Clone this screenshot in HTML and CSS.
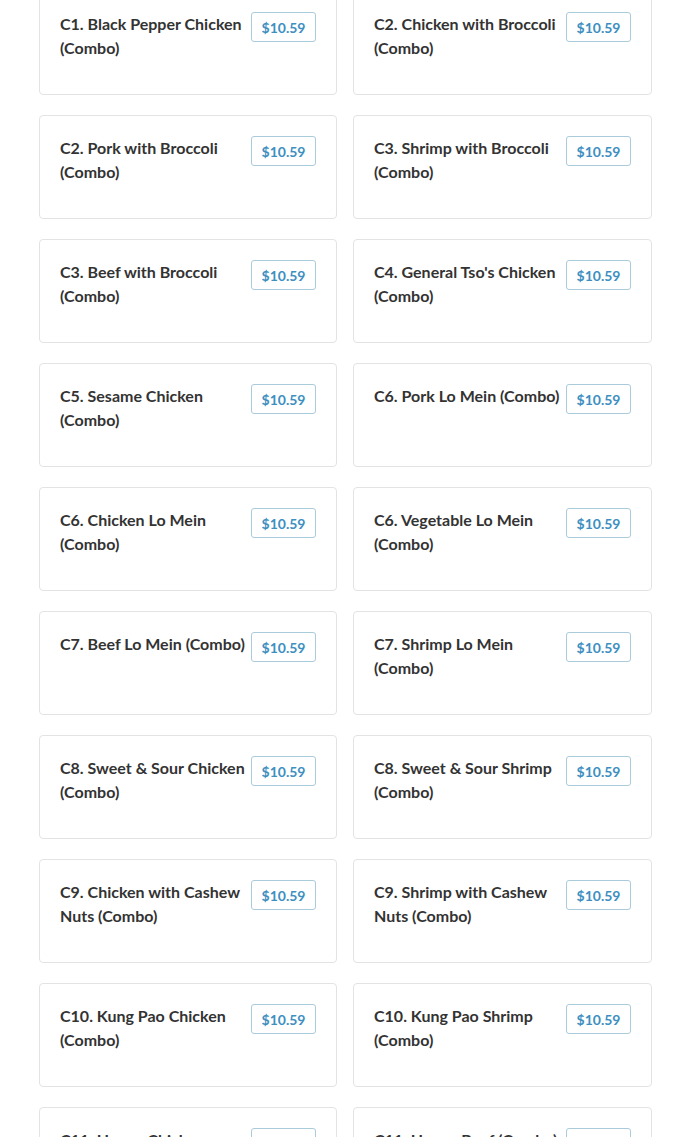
FILE: index.html
```html
<!DOCTYPE html>
<html lang="en">
<head>
    <meta charset="UTF-8">
    <meta name="viewport" content="width=device-width, initial-scale=1.0">
    <title>Combo Menu</title>
    <link rel="stylesheet" href="styles.css">
</head>
<body>

<div class="menu" id="menu">
    <!-- combo items are added by the script below -->
</div>

<script>
    const items = [
        "C1. Black Pepper Chicken (Combo)", "C2. Chicken with Broccoli (Combo)",
        "C2. Pork with Broccoli (Combo)", "C3. Shrimp with Broccoli (Combo)",
        "C3. Beef with Broccoli (Combo)", "C4. General Tso's Chicken (Combo)",
        "C5. Sesame Chicken (Combo)", "C6. Pork Lo Mein (Combo)",
        "C6. Chicken Lo Mein (Combo)", "C6. Vegetable Lo Mein (Combo)",
        "C7. Beef Lo Mein (Combo)", "C7. Shrimp Lo Mein (Combo)",
        "C8. Sweet & Sour Chicken (Combo)", "C8. Sweet & Sour Shrimp (Combo)",
        "C9. Chicken with Cashew Nuts (Combo)", "C9. Shrimp with Cashew Nuts (Combo)",
        "C10. Kung Pao Chicken (Combo)", "C10. Kung Pao Shrimp (Combo)",
        "C11. Honey Chicken (Combo)", "C11. Honey Beef (Combo)"
    ];

    const menu = document.getElementById('menu');

    items.forEach(name => {
        const card = document.createElement('div');
        card.classList.add('card');

        const title = document.createElement('div');
        title.classList.add('title');
        title.textContent = name;

        const price = document.createElement('span');
        price.classList.add('price');
        price.textContent = '$10.59';

        card.appendChild(title);
        card.appendChild(price);
        menu.appendChild(card);
    });
</script>

</body>
</html>
```

FILE: styles.css
```css
body {
    font-family: Lato, "Open Sans", sans-serif;
    background-color: #fff;
    margin: 0;
    padding: 0 38px 0 39px;
}
.menu {
    display: grid;
    grid-template-columns: 298px 299px;
    column-gap: 16px;
    row-gap: 20px;
    margin-top: -9px;
}
.card {
    display: flex;
    align-items: flex-start;
    height: 104px;
    box-sizing: border-box;
    padding: 20px 20px 0 20px;
    border: 1px solid #e3e3e3;
    border-radius: 4px;
    background-color: #fff;
}
.title {
    flex: 1;
    font-size: 16px;
    font-weight: bold;
    line-height: 24px;
    color: #333;
}
.price {
    flex-shrink: 0;
    width: 65px;
    margin-left: 4px;
    height: 30px;
    line-height: 30px;
    box-sizing: border-box;
    border: 1px solid #a9cbdc;
    border-radius: 3px;
    text-align: center;
    font-size: 14px;
    font-weight: bold;
    color: #3d8fbf;
}
```
